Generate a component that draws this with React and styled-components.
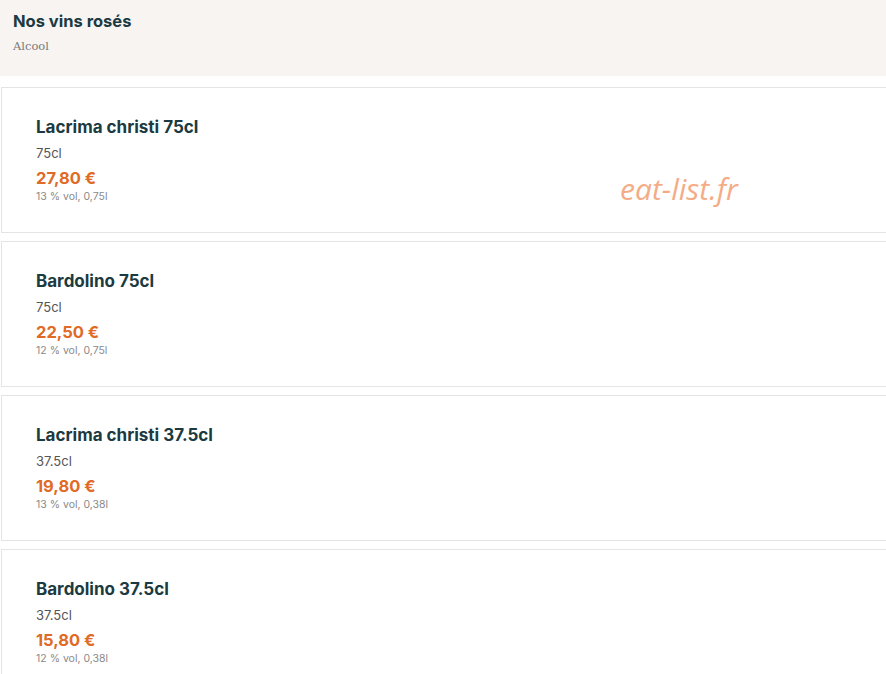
import React from "react";
import styled, { createGlobalStyle } from "styled-components";

const GlobalStyle = createGlobalStyle`
    body {
        margin: 0;
        background: #ffffff;
        font-family: "Inter", "Noto Sans", sans-serif;
    }
`;

const Page = styled.div`
    position: relative;
    width: 886px;
    height: 674px;
    overflow: hidden;
    background: #ffffff;
`;

const Header = styled.header`
    background: #f7f4f1;
    height: 76px;
    padding: 11px 13px 0;
    box-sizing: border-box;
`;

const Heading = styled.h1`
    margin: 0;
    font-weight: 700;
    font-size: 16.5px;
    line-height: 20px;
    color: #1b3a41;
`;

const Category = styled.div`
    margin-top: 7px;
    font-family: "DejaVu Serif", "Liberation Serif", serif;
    font-size: 11.5px;
    line-height: 16px;
    color: #7a7a7a;
`;

const List = styled.div`
    display: flex;
    flex-direction: column;
    gap: 8px;
    padding: 11px 0 0 1px;
`;

const Card = styled.div`
    width: 910px;
    height: 146px;
    box-sizing: border-box;
    border: 1px solid #e4e4e4;
    padding: 28px 34px 0;
    background: #ffffff;
`;

const Title = styled.div`
    font-weight: 700;
    font-size: 17px;
    line-height: 22px;
    color: #1b3a41;
`;

const Size = styled.div`
    margin-top: 6px;
    font-size: 13px;
    line-height: 18px;
    color: #555555;
`;

const Price = styled.div`
    margin-top: 6px;
    font-weight: 700;
    font-size: 16.5px;
    line-height: 20px;
    color: #e06a26;
`;

const Meta = styled.div`
    margin-top: 2px;
    font-size: 10.5px;
    line-height: 14px;
    color: #8a8a8a;
`;

const Watermark = styled.div`
    position: absolute;
    left: 620px;
    top: 169px;
    font-family: "Open Sans", sans-serif;
    font-style: italic;
    font-size: 30px;
    line-height: 40px;
    color: #f4a47a;
    opacity: 0.9;
`;

const wines = [
    { name: "Lacrima christi 75cl", size: "75cl", price: "27,80 €", meta: "13 % vol, 0,75l" },
    { name: "Bardolino 75cl", size: "75cl", price: "22,50 €", meta: "12 % vol, 0,75l" },
    { name: "Lacrima christi 37.5cl", size: "37.5cl", price: "19,80 €", meta: "13 % vol, 0,38l" },
    { name: "Bardolino 37.5cl", size: "37.5cl", price: "15,80 €", meta: "12 % vol, 0,38l" },
];

export default function App() {
    return (
        <Page>
            <GlobalStyle />
            <Header>
                <Heading>Nos vins rosés</Heading>
                <Category>Alcool</Category>
            </Header>
            <List>
                {wines.map((wine) => (
                    <Card key={wine.name}>
                        <Title>{wine.name}</Title>
                        <Size>{wine.size}</Size>
                        <Price>{wine.price}</Price>
                        <Meta>{wine.meta}</Meta>
                    </Card>
                ))}
            </List>
            <Watermark>eat-list.fr</Watermark>
        </Page>
    );
}
